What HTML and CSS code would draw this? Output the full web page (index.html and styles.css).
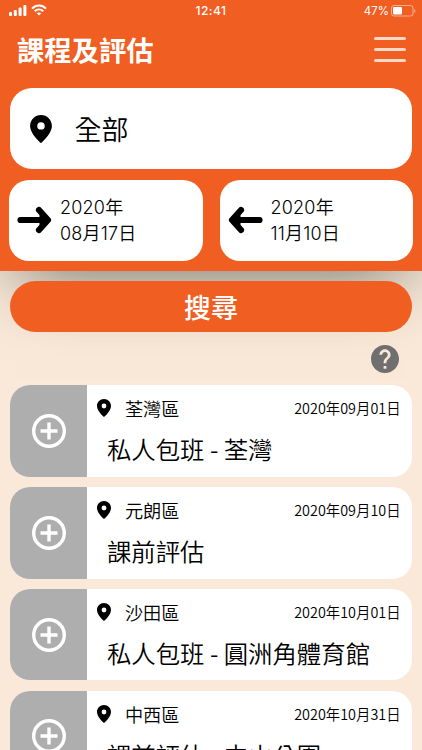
FILE: index.html
```html
<!DOCTYPE html>
<html lang="zh-Hant">
<head>
  <meta charset="UTF-8">
  <meta name="viewport" content="width=device-width, initial-scale=1.0">
  <title>課程及評估</title>
  <link rel="stylesheet" href="styles.css">
</head>
<body>

<svg class="sprite" width="0" height="0">
  <symbol id="pin" viewBox="5 2 14 18">
    <path d="M12 2C8.13 2 5 5.13 5 9c0 5.25 7 11 7 11s7-5.75 7-11c0-3.87-3.13-7-7-7zm0 9.4a2.4 2.4 0 1 1 0-4.8 2.4 2.4 0 0 1 0 4.8z"/>
  </symbol>
  <symbol id="arrow" viewBox="0 0 34 28">
    <path d="M3 14H29M21.5 4L30.5 14L21.5 24" fill="none" stroke="#000" stroke-width="6.2" stroke-linecap="round" stroke-linejoin="round"/>
    <path d="M22 9L30 14L22 19Z"/>
  </symbol>
  <symbol id="plus" viewBox="0 0 34 34">
    <path d="M17 8.5V25.5M8.5 17H25.5" fill="none" stroke="#fff" stroke-width="3.4"/>
    <circle cx="17" cy="17" r="15.3" fill="none" stroke="#fff" stroke-width="3.4"/>
  </symbol>
</svg>

<header class="header">
  <div class="status">
    <div class="signal">
      <svg width="18" height="12" viewBox="0 0 18 12" fill="#fff">
        <rect x="0" y="8" width="3" height="4" rx="1"/>
        <rect x="4.8" y="6" width="3" height="6" rx="1"/>
        <rect x="9.6" y="3.5" width="3" height="8.5" rx="1"/>
        <rect x="14.4" y="1" width="3" height="11" rx="1"/>
      </svg>
      <svg width="16" height="12" viewBox="0 0 16 12" fill="none" stroke="#fff" stroke-width="2.1">
        <path d="M1 4.6C5 .4 11 .4 15 4.6M3.7 7.3C6.2 4.9 9.8 4.9 12.3 7.3"/>
        <path d="M8 11.5L5.7 9.2C7 8.1 9 8.1 10.3 9.2Z" fill="#fff" stroke="none"/>
      </svg>
    </div>
    <div class="clock">12:41</div>
    <div class="battery">
      <span>47%</span>
      <svg width="25" height="12" viewBox="0 0 25 12">
        <rect x=".5" y=".5" width="21.5" height="10.5" rx="2.5" fill="none" stroke="#fff" stroke-opacity=".5"/>
        <rect x="2" y="2" width="9" height="7.5" rx="1" fill="#fff"/>
        <path d="M23.3 4v4c1.5-.6 1.5-3.4 0-4z" fill="#fff" fill-opacity=".5"/>
      </svg>
    </div>
  </div>
  <div class="title-bar">
    <h1>課程及評估</h1>
    <div class="menu"><i></i><i></i><i></i></div>
  </div>
  <div class="region">
    <svg class="region-pin"><use href="#pin"/></svg>
    <span>全部</span>
  </div>
  <div class="dates">
    <div class="date">
      <svg class="arrow"><use href="#arrow"/></svg>
      <p>2020年<br>08月17日</p>
    </div>
    <div class="date">
      <svg class="arrow back"><use href="#arrow"/></svg>
      <p>2020年<br>11月10日</p>
    </div>
  </div>
</header>

<main>
  <button class="search">搜尋</button>
  <div class="help">
    <svg width="28" height="28" viewBox="2 2 20 20" fill="#6f6f6f">
      <path d="M12 2C6.48 2 2 6.48 2 12s4.48 10 10 10 10-4.48 10-10S17.52 2 12 2zm1 17h-2v-2h2v2zm2.07-7.75l-.9.92C13.45 12.9 13 13.5 13 15h-2v-.5c0-1.1.45-2.1 1.17-2.83l1.24-1.26c.37-.36.59-.86.59-1.41 0-1.1-.9-2-2-2s-2 .9-2 2H8c0-2.21 1.79-4 4-4s4 1.79 4 4c0 .88-.36 1.68-.93 2.25z"/>
    </svg>
  </div>

  <div class="card">
    <div class="add"><svg><use href="#plus"/></svg></div>
    <div class="info">
      <div class="meta">
        <svg class="pin"><use href="#pin"/></svg>
        <span class="district">荃灣區</span>
        <span class="day">2020年09月01日</span>
      </div>
      <h2>私人包班 - 荃灣</h2>
    </div>
  </div>
  <div class="card">
    <div class="add"><svg><use href="#plus"/></svg></div>
    <div class="info">
      <div class="meta">
        <svg class="pin"><use href="#pin"/></svg>
        <span class="district">元朗區</span>
        <span class="day">2020年09月10日</span>
      </div>
      <h2>課前評估</h2>
    </div>
  </div>
  <div class="card">
    <div class="add"><svg><use href="#plus"/></svg></div>
    <div class="info">
      <div class="meta">
        <svg class="pin"><use href="#pin"/></svg>
        <span class="district">沙田區</span>
        <span class="day">2020年10月01日</span>
      </div>
      <h2>私人包班 - 圓洲角體育館</h2>
    </div>
  </div>
  <div class="card">
    <div class="add"><svg><use href="#plus"/></svg></div>
    <div class="info">
      <div class="meta">
        <svg class="pin"><use href="#pin"/></svg>
        <span class="district">中西區</span>
        <span class="day">2020年10月31日</span>
      </div>
      <h2>課前評估 - 中山公園</h2>
    </div>
  </div>
</main>

</body>
</html>
```
FILE: styles.css
```css
* {
  box-sizing: border-box;
}

body {
  margin: 0;
  height: 750px;
  overflow: hidden;
  font-family: 'Noto Sans CJK TC', sans-serif;
  background-color: #fae9d8;
  color: #000;
}

h1, h2, p {
  margin: 0;
}

.sprite {
  display: block;
}

.header {
  height: 271px;
  padding: 0 9px;
  background-color: #f05e22;
  box-shadow: 0 20px 70px -16px rgba(20, 30, 30, 0.6);
}

.status {
  display: grid;
  grid-template-columns: 1fr auto 1fr;
  align-items: center;
  height: 22px;
  color: #fff;
  font-family: Inter, sans-serif;
  font-size: 12px;
  line-height: 22px;
}

.signal {
  display: flex;
  gap: 4px;
  padding-bottom: 2px;
}

.clock {
  font-weight: 500;
  letter-spacing: 0.5px;
}

.battery {
  display: flex;
  justify-content: flex-end;
  align-items: center;
  gap: 2px;
  margin-right: -3px;
  font-size: 11.5px;
}

.title-bar {
  display: flex;
  justify-content: space-between;
  height: 66px;
  padding: 8px 7px 0 8px;
}

h1 {
  color: #fff;
  font-size: 27.3px;
  font-weight: 700;
  line-height: 39px;
}

.menu {
  display: flex;
  flex-direction: column;
  gap: 8px;
  width: 32px;
  padding-top: 7px;
}

.menu i {
  height: 3px;
  border-radius: 2px;
  background-color: #fbd9c9;
}

.region {
  display: flex;
  align-items: center;
  gap: 22px;
  height: 81px;
  margin: 0 1.4px;
  padding-left: 20px;
  border-radius: 22px;
  background-color: #fff;
  font-size: 27px;
  font-weight: 350;
}

.region-pin {
  width: 22px;
  height: 28px;
}

.dates {
  display: flex;
  gap: 17px;
  margin-top: 10.5px;
}

.date {
  display: flex;
  align-items: center;
  flex: 1;
  gap: 8px;
  height: 81.5px;
  padding-left: 8px;
  border-radius: 20px;
  background-color: #fff;
  font-family: Inter, 'Noto Sans CJK TC', sans-serif;
  font-size: 18px;
  font-weight: 350;
  letter-spacing: 0.2px;
  line-height: 26px;
}

.date p {
  padding-top: 1px;
}

.arrow {
  width: 35px;
  height: 28px;
}

.back {
  transform: scaleX(-1);
}

main {
  padding: 10px 10.4px 0;
}

.search {
  position: relative;
  display: block;
  width: 100%;
  height: 51px;
  border: none;
  border-radius: 26px;
  background-color: #f05e22;
  color: #fff;
  font-family: inherit;
  font-size: 27px;
  font-weight: 500;
}

.help {
  display: flex;
  justify-content: flex-end;
  height: 53px;
  padding: 13px 12.6px 0 0;
}

.card {
  display: flex;
  height: 91.7px;
  margin-bottom: 10.2px;
  border-radius: 20px;
  overflow: hidden;
  background-color: #fff;
}

.add {
  display: flex;
  justify-content: center;
  align-items: center;
  width: 76.5px;
  background-color: #aeaeae;
}

.add svg {
  width: 34px;
  height: 34px;
}

.info {
  flex: 1;
  padding: 9px 11px 0 10px;
}

.meta {
  display: flex;
  align-items: center;
  height: 28px;
}

.pin {
  width: 14px;
  height: 18px;
}

.district {
  margin-left: 14px;
  font-size: 18.2px;
  font-weight: 350;
}

.day {
  margin-left: auto;
  padding-bottom: 1px;
  font-size: 14.4px;
  font-weight: 350;
}

h2 {
  padding-left: 10px;
  font-size: 24.4px;
  font-weight: 350;
  line-height: 54px;
}
```
